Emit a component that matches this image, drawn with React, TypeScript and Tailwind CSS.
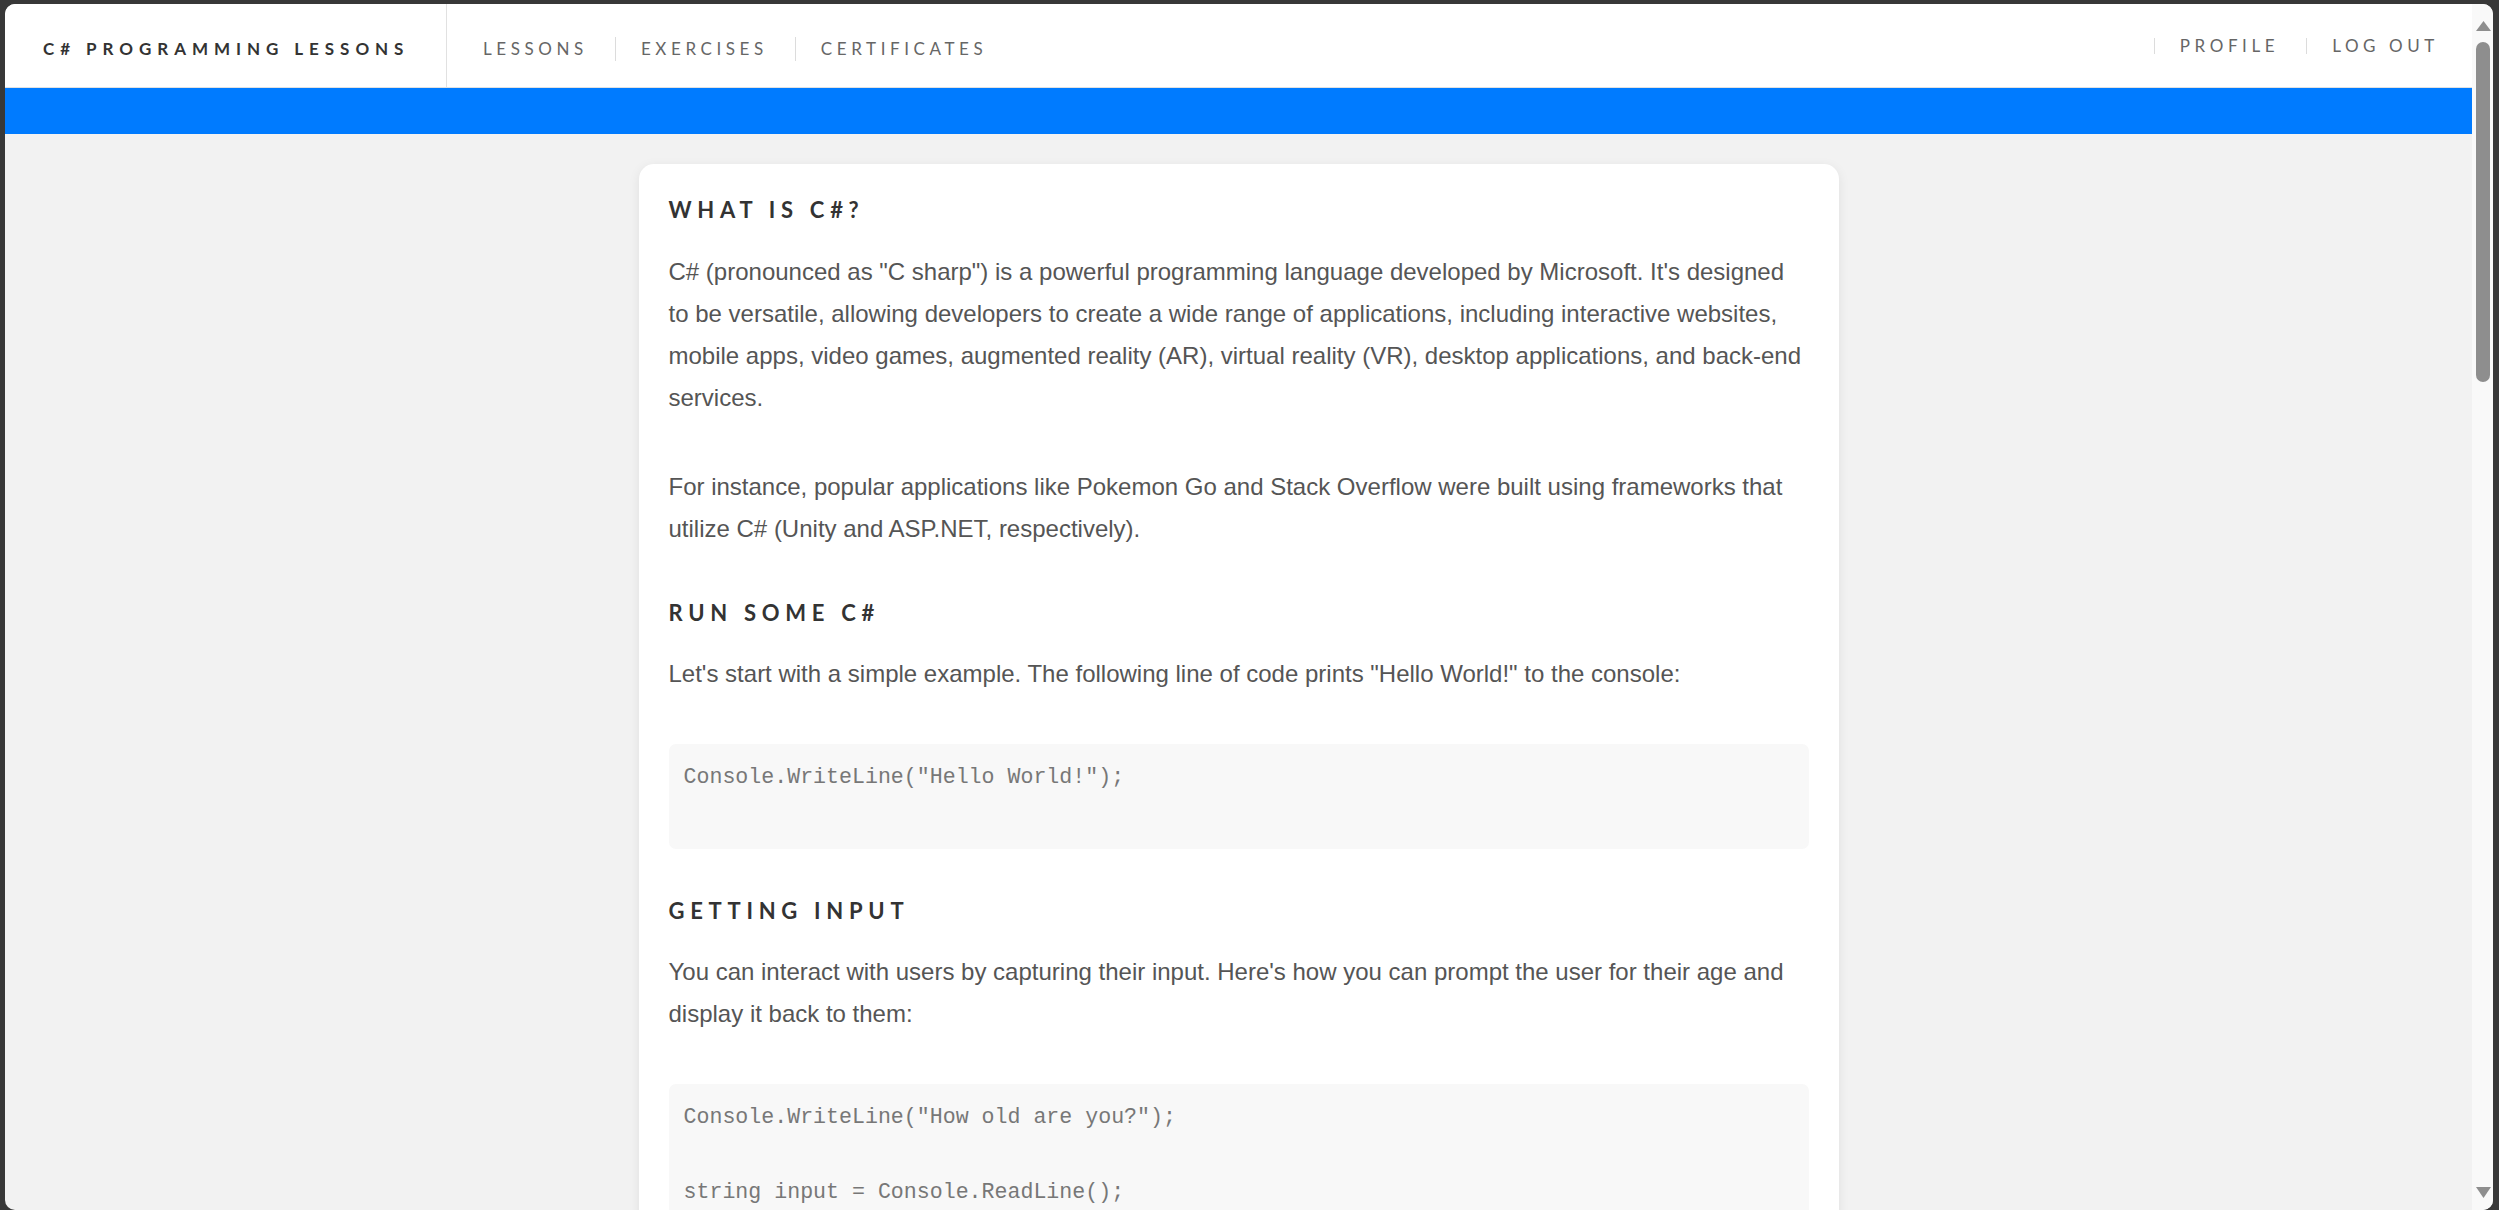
import type { ReactNode } from 'react';

const heading = "font-['Lato',sans-serif] font-bold text-[22px] leading-[30px] tracking-[0.26em] text-[#333]";
const para = "font-['Liberation_Sans',Arial,sans-serif] text-[24px] leading-[42px] text-[#555]";
const code =
  "font-['Liberation_Mono','Courier_New',monospace] text-[21.6px] leading-[37.5px] text-[#777] bg-[#f8f8f8] rounded-[7px] px-[15px] py-[15px] whitespace-pre";

function NavItem({ children, first }: { children: ReactNode; first?: boolean }) {
  return (
    <div className={`flex items-center ${first ? '' : 'border-l border-[#dcdcdc]'} pl-[25px] pr-[27px]`}>
      <span className="font-['Lato',sans-serif] text-[17px] tracking-[0.27em] text-[#666]">{children}</span>
    </div>
  );
}

function Header() {
  return (
    <header className="h-[84px] shrink-0 bg-white border-b border-[#e1e1e1] flex items-stretch justify-between">
      <div className="flex items-stretch">
        <div className="w-[442px] border-r border-[#e1e1e1] flex items-center pl-[38px] pt-[6px]">
          <span className="font-['Lato',sans-serif] font-bold text-[17px] tracking-[0.35em] text-[#333] whitespace-nowrap">
            C# PROGRAMMING LESSONS
          </span>
        </div>
        <nav className="flex items-center pl-[11px] pt-[6px]">
          <div className="flex h-[24px]">
            <NavItem first>LESSONS</NavItem>
            <NavItem>EXERCISES</NavItem>
            <NavItem>CERTIFICATES</NavItem>
          </div>
        </nav>
      </div>
      <nav className="flex items-center pr-[6px]">
        <div className="flex h-[16px]">
          <NavItem>PROFILE</NavItem>
          <NavItem>LOG OUT</NavItem>
        </div>
      </nav>
    </header>
  );
}

function Scrollbar() {
  return (
    <div className="w-[21px] shrink-0 bg-[#f9f9f9] flex flex-col items-center pt-[17px] pb-[12px]">
      <svg width="15" height="10" viewBox="0 0 15 10" className="ml-[1px]">
        <path d="M7.5 0 L15 10 L0 10 Z" fill="#8e8e8e" />
      </svg>
      <div className="w-[14px] h-[340px] mt-[11px] ml-[1px] rounded-[7px] bg-[#8e8e8e]" />
      <div className="flex-1" />
      <svg width="15" height="11" viewBox="0 0 15 11" className="ml-[1px]">
        <path d="M0 0 L15 0 L7.5 11 Z" fill="#8e8e8e" />
      </svg>
    </div>
  );
}

export default function App() {
  return (
    <div className="h-[1210px] bg-[#383838] pl-[5px] pt-[4px] pr-[6px] overflow-hidden">
      <div className="h-[1206px] rounded-[10px] overflow-hidden flex bg-[#f2f2f2]">
        <div className="flex-1 min-w-0 flex flex-col overflow-hidden">
          <Header />
          <div className="h-[46px] bg-[#007bff] shrink-0" />
          <main className="flex-1 min-h-0 flex justify-center pt-[30px]">
            <article className="w-[1200px] self-start shrink-0 bg-white rounded-[15px] shadow-[0_3px_12px_rgba(0,0,0,0.08)] px-[30px] pt-[31px] pb-[30px]">
              <h2 className={`${heading} mb-[26px]`}>WHAT IS C#?</h2>
              <p className={`${para} mb-[47px]`}>
                C# (pronounced as "C sharp") is a powerful programming language developed by Microsoft. It's designed
                to be versatile, allowing developers to create a wide range of applications, including interactive websites,
                mobile apps, video games, augmented reality (AR), virtual reality (VR), desktop applications, and back-end
                services.
              </p>
              <p className={`${para} mb-[48px]`}>
                For instance, popular applications like Pokemon Go and Stack Overflow were built using frameworks that
                utilize C# (Unity and ASP.NET, respectively).
              </p>

              <h2 className={`${heading} mt-[3px] mb-[25px]`}>RUN SOME C#</h2>
              <p className={`${para} mb-[49px]`}>
                Let's start with a simple example. The following line of code prints "Hello World!" to the console:
              </p>
              <pre className={`${code} mb-[47px]`}>{'Console.WriteLine("Hello World!");\n\n'}</pre>

              <h2 className={`${heading} mb-[25px]`}>GETTING INPUT</h2>
              <p className={`${para} mb-[49px]`}>
                You can interact with users by capturing their input. Here's how you can prompt the user for their age and
                display it back to them:
              </p>
              <pre className={code}>
                {'Console.WriteLine("How old are you?");\n\nstring input = Console.ReadLine();\n\nConsole.WriteLine("You are " + input + " years old.");\n\n'}
              </pre>
            </article>
          </main>
        </div>
        <Scrollbar />
      </div>
    </div>
  );
}
